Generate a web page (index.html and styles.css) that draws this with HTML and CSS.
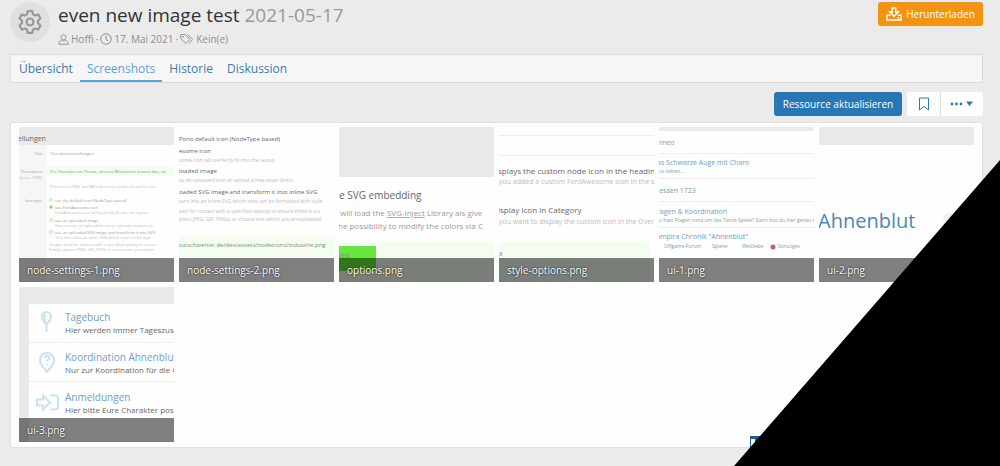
FILE: index.html
```html
<!DOCTYPE html>
<html lang="de">
  <head>
    <meta charset="utf-8" />
    <meta name="viewport" content="width=device-width, initial-scale=1" />
    <title>even new image test</title>
    <link rel="stylesheet" href="styles.css">
  </head>

  <body>
    <div class="page">
      <header class="header">
        <div class="resource-icon">
          <svg viewBox="0 0 24 24" width="26" height="26">
            <path d="M9.800 2h4.400l.6 3 1.800 1 2.900-1 2.200 3.800-2.300 2v2.400l2.300 2-2.200 3.800-2.900-1-1.800 1-.6 3H9.800l-.6-3-1.800-1-2.900 1-2.200-3.800 2.300-2v-2.400l-2.300-2L4.500 5l2.900 1 1.800-1z" />
            <circle cx="12" cy="12" r="3.200" />
          </svg>
        </div>
        <div class="header-text">
          <h1>even new image test <span>2021-05-17</span></h1>
          <ul class="meta">
            <li>
              <svg viewBox="0 0 12 12" width="11" height="11">
                <circle cx="6" cy="3.600" r="2.800" />
                <path d="M3.800 7C2 7.200 1 8.300 1 10v1.200h10V10c0-1.700-1-2.800-2.800-3-1.400.7-3 .7-4.400 0z" />
              </svg>
              <a href="#">Hoffi</a>
            </li>
            <li>
              <svg viewBox="0 0 12 12" width="12" height="12">
                <circle cx="6" cy="6" r="5.200" />
                <path d="M6 2.800V6.500l2 1.300" />
              </svg>
              <time datetime="2021-05-17">17. Mai 2021</time>
            </li>
            <li>
              <svg viewBox="0 0 15 12" width="14" height="12">
                <path d="M.8 1.200h4.700l5.200 5.200-4.300 4.400L.8 5.600z" />
                <path d="M8 1.200l5.600 5.200-4.200 4.400" />
                <circle cx="3.300" cy="3.700" r=".5" />
              </svg>
              Kein(e)
            </li>
          </ul>
        </div>
        <button type="button" class="btn btn-download">
          <svg viewBox="0 0 16 14" width="16" height="14">
            <path d="M6.300 1h3.400v4h2.600L8 9.300 3.700 5h2.600zM4.400 8.200H1V13h14V8.200h-3.400M11.500 10.800h1.500" />
          </svg>
          Herunterladen
        </button>
      </header>

      <nav class="tabs">
        <a href="#">Übersicht</a>
        <a href="#" class="active">Screenshots</a>
        <a href="#">Historie</a>
        <a href="#">Diskussion</a>
      </nav>

      <div class="actions">
        <button type="button" class="btn btn-primary">Ressource aktualisieren</button>
        <div class="btn-group">
          <button type="button" aria-label="Lesezeichen">
            <svg class="bookmark" viewBox="0 0 12 14" width="12" height="14">
              <path d="M1.500 1h9v12L6 9.300 1.500 13z" />
            </svg>
          </button>
          <button type="button" aria-label="Mehr">
            <svg class="more" viewBox="0 0 24 8" width="24" height="8">
              <circle cx="2" cy="4" r="1.400" />
              <circle cx="6.500" cy="4" r="1.400" />
              <circle cx="11" cy="4" r="1.400" />
              <path d="M16 1.500h7L19.500 6z" />
            </svg>
          </button>
        </div>
      </div>

      <main class="gallery">
        <a href="#" class="thumb">
          <svg viewBox="0 0 155 155">
            <rect class="grey" width="155" height="18" />
            <rect class="pale" y="18" width="28" height="137" />
            <text class="dark" x="-7" y="14" font-size="7">stellungen</text>
            <g font-size="4">
              <text x="16" y="28">Title</text>
              <text x="31" y="28">Charaktervorstellungen</text>
              <text x="2" y="46">Description</text>
              <text class="light" x="0" y="52">ay use HTML</text>
              <rect class="mint" x="28" y="39" width="127" height="10" />
              <text class="green" x="31" y="46">Pro Charakter ein Thema, unseren Mitspielern kennen das, sie</text>
              <text class="light" x="30" y="61">This text is HTML but BBCodes may not be allowed to use</text>
              <text x="6" y="75">Icon type</text>
              <text x="36" y="75">use the default icon (NodeType based)</text>
              <text x="36" y="82">use FontAwesome icon</text>
              <text x="36" y="95">use an uploaded image</text>
              <text x="36" y="107">use an uploaded SVG image and transform it into SVG</text>
              <g class="light">
                <text x="36" y="87">FontAwesome icon will perfectly fit into the layout</text>
                <text x="36" y="100">You can use an uploaded icon or upload a new asset</text>
                <text x="36" y="112">This turns into an inline SVG which now can be style</text>
                <text x="30" y="119">Images used for contact with a specified opacity to ensure</text>
                <text x="30" y="124">family options (PNG, GIF, JPEG) or choose one you prefer</text>
              </g>
            </g>
            <g class="radio">
              <circle cx="32" cy="73" r="1.500" />
              <circle class="checked" cx="32" cy="80" r="1.500" />
              <circle cx="32" cy="93" r="1.500" />
              <circle cx="32" cy="105" r="1.500" />
            </g>
          </svg>
          <span>node-settings-1.png</span>
        </a>
        <a href="#" class="thumb">
          <svg viewBox="0 0 155 155">
            <g class="dark" font-size="6">
              <text x="0" y="14">Pono default icon (NodeType based)</text>
              <text x="0" y="26">esome icon</text>
              <text x="0" y="46">loaded image</text>
              <text x="0" y="67">oaded SVG image and transform it into inline SVG</text>
            </g>
            <g class="light" font-size="5">
              <text x="0" y="35">some icon will perfectly fit into the layout.</text>
              <text x="0" y="55">as an uploaded icon or upload a new asset direct.</text>
              <text x="0" y="76">turn into an inline SVG which now can be formatted with style</text>
              <text x="0" y="86">ped for contact with a specified opacity to ensure there is a s</text>
              <text x="0" y="94">ports JPEG, GIF, PNGs) or choose one which you preuploaded.</text>
            </g>
            <rect class="mint" y="109" width="155" height="21" />
            <text class="green" x="0" y="120" font-size="6">tutschwerter.de/dev/assets/nodeicons/industrie.png</text>
          </svg>
          <span>node-settings-2.png</span>
        </a>
        <a href="#" class="thumb">
          <svg viewBox="0 0 155 155">
            <rect class="grey" width="155" height="50" />
            <text class="dark" x="0" y="72" font-size="10">e SVG embedding</text>
            <g class="mid" font-size="8">
              <text x="1" y="89">will load the <tspan text-decoration="underline">SVG-Inject</tspan> Library als give</text>
              <text x="-1" y="102">he possibility to modify the colors via C</text>
            </g>
            <rect class="mint" y="115" width="155" height="40" />
            <rect class="lime" y="119" width="37" height="25" />
            <text class="green" x="0" y="131" font-size="7">ted</text>
          </svg>
          <span>options.png</span>
        </a>
        <a href="#" class="thumb">
          <svg viewBox="0 0 155 155">
            <path class="rule" d="M0 8.500h155M0 28.500h155" />
            <g class="dark" font-size="8">
              <text x="-1" y="47">splays the custom node icon in the heading</text>
              <text x="-1" y="86">isplay Icon in Category</text>
            </g>
            <g class="light" font-size="7">
              <text x="0" y="57">you added a custom FontAwesome icon in the s</text>
              <text x="0" y="97">you want to display the custom icon in the Over</text>
            </g>
            <rect class="mint" x="-4" y="115" width="155" height="44" rx="2" />
            <text class="green" x="0" y="129" font-size="7">x</text>
          </svg>
          <span>style-options.png</span>
        </a>
        <a href="#" class="thumb">
          <svg viewBox="0 0 155 155">
            <rect class="grey" width="155" height="4" />
            <path class="rule" d="M0 26.500h155M0 51.500h155M0 74.500h155M0 100.500h155" />
            <g class="blue" font-size="7">
              <text x="-3" y="18">emeo</text>
              <text x="-7" y="38">Das Schwarze Auge mit Charo</text>
              <text x="-5" y="66">Hessen 1723</text>
              <text x="-2" y="87">ragen &amp; Koordination</text>
              <text x="-7" y="112">Vampira Chronik "Ahnenblut"</text>
            </g>
            <g font-size="5">
              <text x="0" y="46">us lieben...</text>
              <text x="0" y="95">u hast Fragen rund um das Tanze Spiele? Dann bist du hier genau r</text>
              <g class="blue">
                <text x="5" y="121">Offgame-Forum</text>
                <text x="53" y="121">Spieler</text>
                <text x="83" y="121">Weltliebe</text>
              </g>
              <circle class="red" cx="114" cy="120" r="2.500" />
              <text x="119" y="121">Sonstiges</text>
            </g>
          </svg>
          <span>ui-1.png</span>
        </a>
        <a href="#" class="thumb">
          <svg viewBox="0 0 155 155">
            <rect class="grey" width="155" height="18" />
            <text class="title" x="-1" y="101" font-size="20">Ahnenblut</text>
            <circle class="cloud" cx="130" cy="92" r="6" />
          </svg>
          <span>ui-2.png</span>
        </a>
        <a href="#" class="thumb">
          <svg viewBox="0 0 155 155">
            <rect class="grey" width="155" height="155" />
            <rect class="white" x="10" y="17" width="145" height="138" />
            <path class="rule" d="M10 55.500h145M10 94.500h145" />
            <g class="pictogram">
              <path d="M27.500 25a4.500 4.500 0 0 1 4.500 4.500c0 2-1 4.500-2.500 6h-4c-1.500-1.500-2.500-4-2.500-6a4.500 4.500 0 0 1 4.500-4.500zM27.500 36v9M25.500 27v7" />
              <path d="M28 85c-3-4.500-7-7-7-12a7 7 0 0 1 14 0c0 5-4 7.500-7 12zM26 71c.5-3 5-2.500 4.500.3-.3 1.500-2.500 1.500-2.500 3.200M28 77v1" />
              <path d="M18 112.500v6h6v4l7-7-7-7v4zM31 108.500h5c2 0 3 1 3 3v8c0 2-1 3-3 3h-5" />
            </g>
            <g class="blue" font-size="10">
              <text x="46" y="34">Tagebuch</text>
              <text x="46" y="74">Koordination Ahnenblut</text>
              <text x="46" y="114">Anmeldungen</text>
            </g>
            <g class="dark" font-size="8">
              <text x="46" y="46">Hier werden immer Tageszusa</text>
              <text x="46" y="86">Nur zur Koordination für die C</text>
              <text x="46" y="126">Hier bitte Eure Charakter post</text>
            </g>
          </svg>
          <span>ui-3.png</span>
        </a>
      </main>
    </div>

    <button type="button" class="scroll-button" aria-label="Nach oben"><i></i></button>
    <div class="corner"></div>
  </body>
</html>
```
FILE: styles.css
```css
* {
  box-sizing: border-box;
}

body {
  margin: 0;
  background-color: #ebebeb;
  color: #333;
  font-family: "Open Sans", "Segoe UI", sans-serif;
  font-size: 12px;
  line-height: 16px;
}

a {
  color: inherit;
  text-decoration: none;
}

button {
  border: 0;
  padding: 0;
  font: inherit;
  cursor: pointer;
}

svg {
  display: block;
  fill: none;
  stroke: currentColor;
}

.page {
  padding: 2px 17px 18px 10px;
}

.header {
  display: flex;
  align-items: flex-start;
  height: 52px;
}

.resource-icon {
  display: flex;
  align-items: center;
  justify-content: center;
  width: 40px;
  height: 40px;
  border-radius: 50%;
  background-color: #e0e0e0;
  color: #999;
}

.resource-icon svg {
  stroke-width: 2;
  stroke-linejoin: round;
}

.header-text {
  flex: 1;
  padding-left: 8px;
}

h1 {
  margin: 0;
  font-size: 19px;
  font-weight: 400;
  line-height: 26px;
}

h1 span {
  color: #999;
}

.meta {
  display: flex;
  margin: 3px 0 0;
  padding: 0;
  color: #8f8f8f;
  font-size: 10px;
  line-height: 16px;
  list-style: none;
}

.meta li {
  display: flex;
  align-items: center;
  gap: 2px;
}

.meta li + li::before {
  content: "·";
  margin-left: 2px;
}

.btn {
  display: flex;
  align-items: center;
  justify-content: center;
  gap: 4px;
  height: 24px;
  padding: 0 8px;
  border-radius: 3px;
  color: #fff;
  font-size: 10px;
  white-space: nowrap;
}

.btn-download {
  width: 105px;
  background-color: #f29413;
}

.btn-download svg {
  stroke-width: 1.5;
}

.btn-primary {
  width: 128px;
  background-color: #2677b3;
}

.tabs {
  display: flex;
  height: 29px;
  padding-left: 1px;
  border: 1px solid #dcdcdc;
  background-color: #f6f6f6;
  color: #3f7cab;
}

.tabs a {
  padding: 6px 7px 4px;
}

.tabs .active {
  border-bottom: 2px solid #5ba3d4;
  color: #5ba3d4;
}

.actions {
  display: flex;
  justify-content: flex-end;
  gap: 5px;
  padding: 9px 0 6px;
}

.btn-group {
  display: flex;
  overflow: hidden;
  border-radius: 3px;
  color: #2c77ad;
}

.btn-group button {
  display: flex;
  align-items: center;
  justify-content: center;
  width: 42px;
  height: 24px;
  background-color: #fff;
  color: inherit;
}

.btn-group button:first-child {
  width: 34px;
  border-right: 1px solid #ddd;
}

.more {
  fill: currentColor;
  stroke: none;
}

.gallery {
  display: grid;
  grid-template-columns: repeat(auto-fill, 155px);
  gap: 5px;
  padding: 4px 8px 5px;
  border: 1px solid #e0e0e0;
  border-radius: 3px;
  background-color: #fefefe;
}

.thumb {
  position: relative;
  height: 155px;
  overflow: hidden;
}

.thumb span {
  position: absolute;
  right: 0;
  bottom: 0;
  left: 0;
  padding: 4px 8px;
  background-color: rgba(0, 0, 0, 0.5);
  color: #fff;
  font-size: 10px;
  text-shadow: 0 0 2px #000;
}

/* Thumbnail contents */

.thumb svg {
  fill: #999;
  stroke: none;
}

.thumb .dark {
  fill: #666;
}

.thumb .mid {
  fill: #999;
}

.thumb .light {
  fill: #bbb;
}

.thumb .blue {
  fill: #6fa0c3;
}

.thumb .title {
  fill: #4c87b5;
}

.thumb .green {
  fill: #7f8f7c;
}

.thumb .grey {
  fill: #eaeaea;
}

.thumb .pale {
  fill: #f6f6f6;
}

.thumb .white {
  fill: #fefefe;
}

.thumb .mint {
  fill: #f3fdf0;
}

.thumb .lime {
  fill: #66e83c;
}

.thumb .red {
  fill: #b66;
}

.thumb .cloud {
  fill: #eaf1f8;
}

.thumb .rule {
  stroke: #eee;
}

.thumb .radio {
  fill: #fff;
  stroke: #b5efaa;
}

.thumb .checked {
  fill: #66e83c;
}

.thumb .pictogram {
  fill: none;
  stroke: #c9e2f3;
  stroke-width: 2;
}

.scroll-button {
  position: fixed;
  right: 220px;
  bottom: 18px;
  width: 30px;
  height: 12px;
  padding: 3px 1px 0;
  background-color: #205d88;
}

.scroll-button i {
  display: block;
  width: 4px;
  height: 9px;
  background-color: #fff;
}

.corner {
  position: fixed;
  right: 0;
  bottom: 0;
  width: 266px;
  height: 306px;
  background-color: #000;
  clip-path: polygon(100% 0, 100% 100%, 0 100%);
}
```
